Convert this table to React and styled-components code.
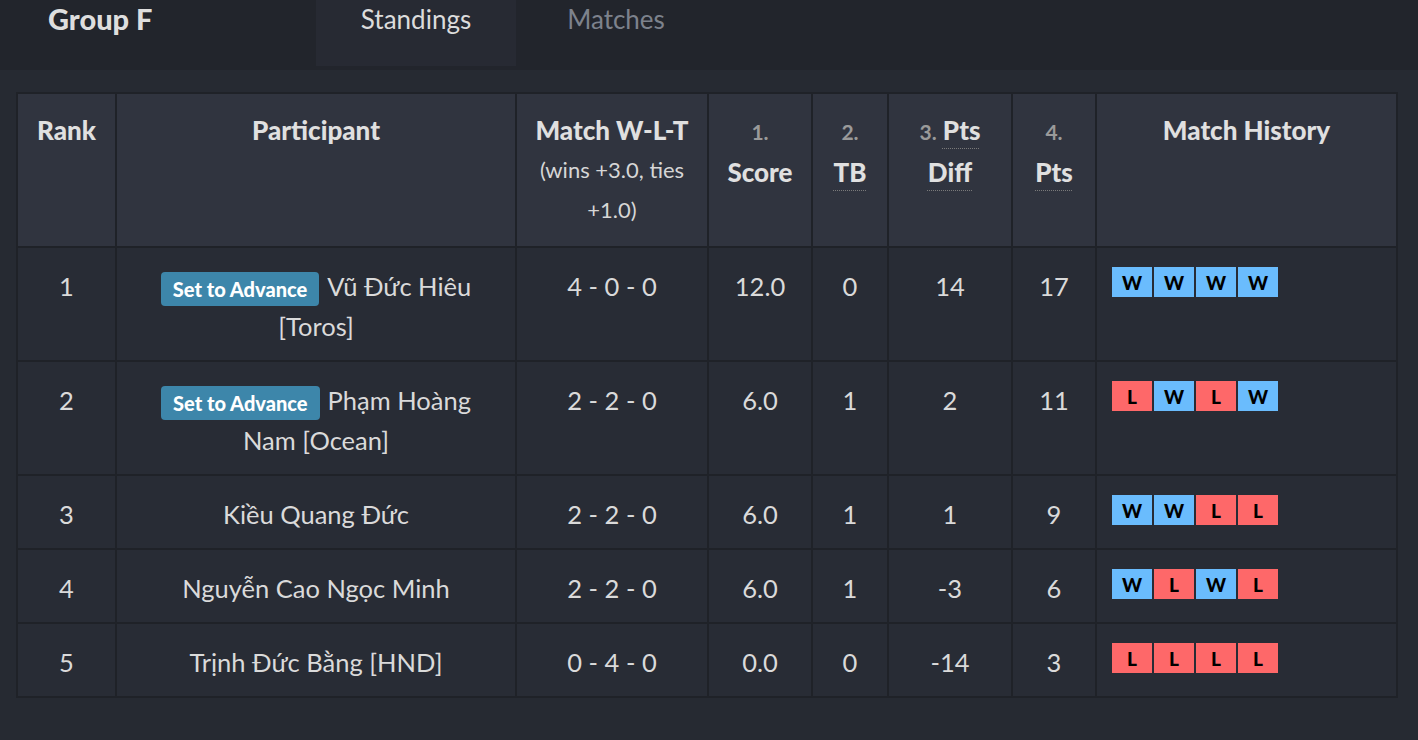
import React from "react";
import styled, { createGlobalStyle } from "styled-components";

const Global = createGlobalStyle`
  html, body { margin: 0; padding: 0; background: #262a32; }
  body { font-family: "Source Sans Pro", Lato, "Noto Sans", sans-serif; color: #dcdcdc; }
`;

const Page = styled.div`
  width: 1418px;
  height: 740px;
  background: #262a32;
  overflow: hidden;
`;

const TopBar = styled.div`
  height: 70px;
  background: #22252c;
  display: flex;
  align-items: flex-start;
`;

const Title = styled.h2`
  margin: 0;
  width: 268px;
  padding-left: 48px;
  font-size: 29px;
  font-weight: 900;
  line-height: 38px;
  color: #dedede;
`;

const Tabs = styled.div`
  display: flex;
`;

const Tab = styled.div`
  width: 200px;
  height: 66px;
  box-sizing: border-box;
  text-align: center;
  font-size: 26px;
  line-height: 38px;
  background: ${(p) => (p.$active ? "#272a33" : "transparent")};
  color: ${(p) => (p.$active ? "#dcdcdc" : "#7d828c")};
`;

const Body = styled.div`
  padding: 22px 0 0 16px;
`;

const Table = styled.table`
  width: 1380px;
  table-layout: fixed;
  border-collapse: collapse;
  border: 2px solid #1f2228;
`;

const Th = styled.th`
  background: #30343f;
  border: 2px solid #1f2228;
  padding: 16px 6px;
  vertical-align: top;
  font-size: 26px;
  font-weight: 900;
  line-height: 40px;
  color: #e0e0e0;
  text-align: center;
`;

const SubNote = styled.div`
  font-size: 22px;
  font-weight: 400;
  color: #d6d6d6;
  line-height: 40px;
`;

const Num = styled.span`
  font-size: 21px;
  font-weight: 700;
  color: #9a9a9a;
`;

const Abbr = styled.abbr`
  text-decoration: underline dotted #7a7a7a;
  text-underline-offset: 8px;
  text-decoration-thickness: 1px;
`;

const Td = styled.td`
  background: #282c35;
  border: 2px solid #1f2228;
  padding: ${(p) => (p.$left ? "18px 15px 14px" : "18px 20px 14px")};
  vertical-align: top;
  font-size: 25.5px;
  line-height: 40px;
  color: #dadada;
  text-align: ${(p) => (p.$left ? "left" : "center")};
`;

const Word = styled.span`
  display: inline;
`;

const AdvanceButton = styled.button`
  display: inline-block;
  vertical-align: -1px;
  background: #3d86aa;
  color: #fff;
  border: none;
  border-radius: 4px;
  font-family: inherit;
  font-size: 20px;
  font-weight: 900;
  line-height: 34px;
  padding: 0 12px;
  margin-right: 8px;
`;

const History = styled.div`
  display: flex;
  gap: 2px;
  padding-top: 1px;
`;

const Result = styled.span`
  width: 40px;
  height: 30px;
  display: flex;
  align-items: center;
  justify-content: center;
  background: ${(p) => (p.$win ? "#6abcfd" : "#fe6869")};
  color: #000;
  font-size: 19px;
  font-weight: 900;
  line-height: 1;
`;

const cols = [99, 400, 192, 104, 76, 124, 84, 301];

const rows = [
  { rank: 1, adv: true, name: "Vũ Đức Hiêu [Toros]", wlt: "4 - 0 - 0", score: "12.0", tb: "0", diff: "14", pts: "17", hist: "WWWW" },
  { rank: 2, adv: true, name: "Phạm Hoàng Nam [Ocean]", wlt: "2 - 2 - 0", score: "6.0", tb: "1", diff: "2", pts: "11", hist: "LWLW" },
  { rank: 3, name: "Kiều Quang Đức", wlt: "2 - 2 - 0", score: "6.0", tb: "1", diff: "1", pts: "9", hist: "WWLL" },
  { rank: 4, name: "Nguyễn Cao Ngọc Minh", wlt: "2 - 2 - 0", score: "6.0", tb: "1", diff: "-3", pts: "6", hist: "WLWL" },
  { rank: 5, name: "Trịnh Đức Bằng [HND]", wlt: "0 - 4 - 0", score: "0.0", tb: "0", diff: "-14", pts: "3", hist: "LLLL" },
];

function Name({ text }) {
  const words = text.split(" ");
  return words.map((w, i) => (
    <React.Fragment key={i}>
      <Word>{w}</Word>
      {i < words.length - 1 ? " " : null}
    </React.Fragment>
  ));
}

export default function App() {
  return (
    <Page>
      <Global />
      <TopBar>
        <Title>Group F</Title>
        <Tabs>
          <Tab $active>Standings</Tab>
          <Tab>Matches</Tab>
        </Tabs>
      </TopBar>
      <Body>
        <Table>
          <colgroup>
            {cols.map((w, i) => (
              <col key={i} style={{ width: w }} />
            ))}
          </colgroup>
          <thead>
            <tr>
              <Th>Rank</Th>
              <Th>Participant</Th>
              <Th>
                Match W-L-T
                <SubNote>
                  (wins +3.0, ties
                  <br />
                  +1.0)
                </SubNote>
              </Th>
              <Th>
                <Num>1.</Num>
                <br />
                Score
              </Th>
              <Th>
                <Num>2.</Num>
                <br />
                <Abbr title="Tie Break">TB</Abbr>
              </Th>
              <Th>
                <Num>3.</Num> <Abbr title="Points Difference">Pts</Abbr>
                <br />
                <Abbr title="Points Difference">Diff</Abbr>
              </Th>
              <Th>
                <Num>4.</Num>
                <br />
                <Abbr title="Points">Pts</Abbr>
              </Th>
              <Th>Match History</Th>
            </tr>
          </thead>
          <tbody>
            {rows.map((r) => (
              <tr key={r.rank}>
                <Td>{r.rank}</Td>
                <Td>
                  {r.adv && <AdvanceButton>Set to Advance</AdvanceButton>}
                  <Name text={r.name} />
                </Td>
                <Td>{r.wlt}</Td>
                <Td>{r.score}</Td>
                <Td>{r.tb}</Td>
                <Td>{r.diff}</Td>
                <Td>{r.pts}</Td>
                <Td $left>
                  <History>
                    {r.hist.split("").map((c, i) => (
                      <Result key={i} $win={c === "W"}>
                        {c}
                      </Result>
                    ))}
                  </History>
                </Td>
              </tr>
            ))}
          </tbody>
        </Table>
      </Body>
    </Page>
  );
}
